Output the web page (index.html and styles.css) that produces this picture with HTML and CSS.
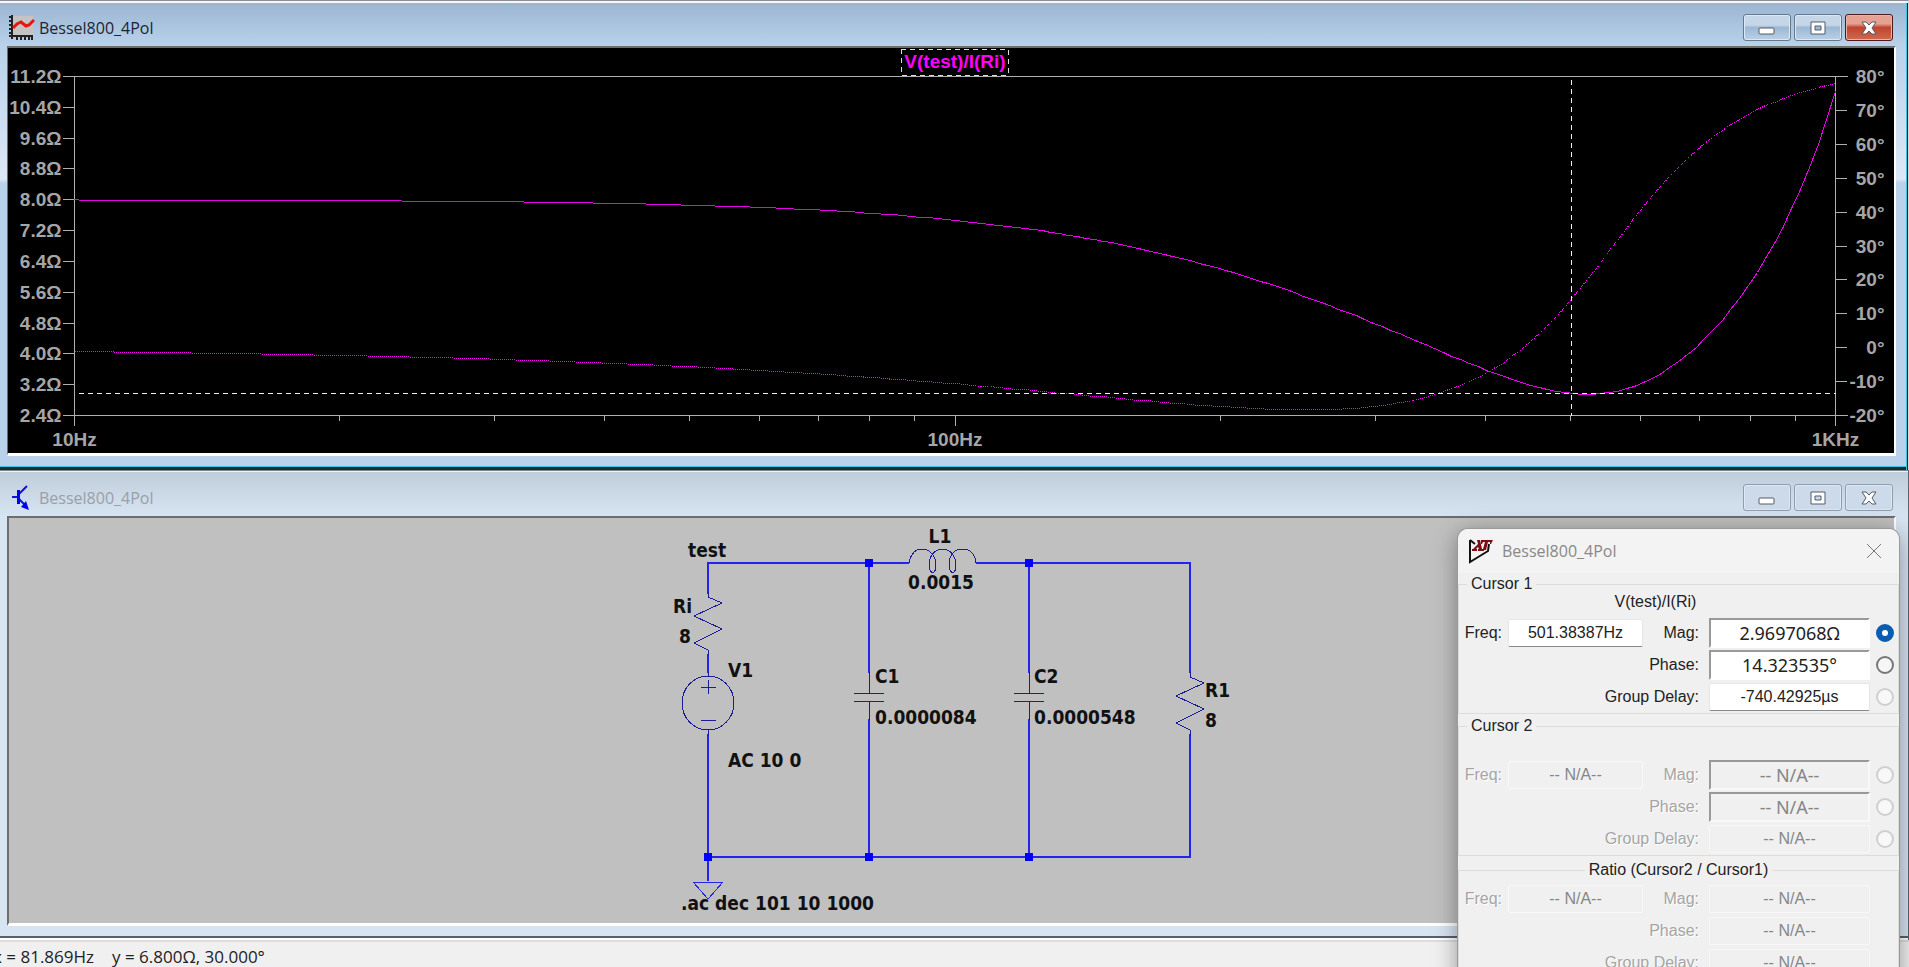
FILE: index.html
```html
<!DOCTYPE html>
<html lang="en">
<head>
<meta charset="utf-8">
<title>Bessel800_4Pol</title>
<link rel="stylesheet" href="styles.css">
</head>
<body>
<main class="desktop">
  <section class="window window-active" aria-label="Plot window">
    <header class="titlebar">
      <svg class="title-icon" width="26" height="26" viewBox="0 0 26 26" aria-hidden="true">
        <rect x="4" y="1" width="20" height="19" fill="#c4c4c4"/>
        <path d="M3 0V24M0 2H3M0 6H3M0 10H3M0 14H3M0 18H3" stroke="#222" stroke-width="2" fill="none"/>
        <path d="M0 21H24M8 21V25M12 21V25M16 21V25M20 21V25M23 21V25" stroke="#222" stroke-width="2" fill="none"/>
        <path d="M4 13L8 9L12 7L17 11L20 10L25 5" stroke="#e8150f" stroke-width="3" fill="none"/>
      </svg>
      <h1 class="title">Bessel800_4Pol</h1>
      <div class="caption-buttons">
        <button class="caption" type="button" aria-label="Minimize"><svg width="18" height="16" viewBox="0 0 18 16"><rect x="1" y="8" width="15" height="6" rx="1" class="glyph"/></svg></button>
        <button class="caption" type="button" aria-label="Maximize"><svg width="18" height="16" viewBox="0 0 18 16"><path fill-rule="evenodd" d="M2 2H16V14H2ZM6 6H12V10H6Z" class="glyph"/></svg></button>
        <button class="caption caption-close" type="button" aria-label="Close"><svg width="18" height="16" viewBox="0 0 18 16"><path d="M2 2H6L9 5L12 2H16L12 8L16 14H12L9 11L6 14H2L6 8Z" class="glyph"/></svg></button>
      </div>
    </header>
    <div class="pane plot-pane">
      <svg id="plot" class="plot" role="img" aria-label="V(test)/I(Ri) magnitude and phase"></svg>
    </div>
  </section>

  <section class="window window-idle" aria-label="Schematic window">
    <header class="titlebar">
      <svg class="title-icon" width="26" height="26" viewBox="0 0 26 26" aria-hidden="true">
        <path d="M3 12H9M10 9L18 1M10 14L17 21" stroke="#11d" stroke-width="2" fill="none"/>
        <path d="M8 5H11V19H8ZM20 25L12 22L17 16Z" fill="#00e"/>
      </svg>
      <h1 class="title">Bessel800_4Pol</h1>
      <div class="caption-buttons">
        <button class="caption" type="button" aria-label="Minimize"><svg width="18" height="16" viewBox="0 0 18 16"><rect x="1" y="8" width="15" height="6" rx="1" class="glyph"/></svg></button>
        <button class="caption" type="button" aria-label="Maximize"><svg width="18" height="16" viewBox="0 0 18 16"><path fill-rule="evenodd" d="M2 2H16V14H2ZM6 6H12V10H6Z" class="glyph"/></svg></button>
        <button class="caption" type="button" aria-label="Close"><svg width="18" height="16" viewBox="0 0 18 16"><path d="M2 2H6L9 5L12 2H16L12 8L16 14H12L9 11L6 14H2L6 8Z" class="glyph"/></svg></button>
      </div>
    </header>
    <div class="pane schematic-pane">
      <svg class="schematic" width="601" height="400" viewBox="651 518 601 400" role="img" aria-label="Filter schematic">
        <g class="wire">
          <path d="M708 594V563H909M976 563H1190V673M708 654V673M708 734V881M708 857H1190V734M869 563V673M869 719V857M1029 563V673M1029 719V857"/>
          <path class="ground" d="M693 882H723L708 899Z"/>
        </g>
        <g class="part">
          <path d="M708 592V597L722 603L694 616L722 629L694 643L708 650V656"/>
          <path d="M1190 672V677L1204 683L1176 696L1204 709L1176 723L1190 730V736"/>
          <ellipse cx="708" cy="703" rx="26" ry="27"/>
          <path d="M708 672V676M708 680V694M701 687H716M701 720H716M708 730V736"/>
          <path d="M869 672V693M854 693H884M854 701H884M869 701V720M1029 672V693M1014 693H1044M1014 701H1044M1029 701V720"/>
          <path d="M909 563C911 553 915 549 922 549C931 549 936 558 936 565C936 570 934 573 933 573C931 573 929 569 929 565C929 556 935 549 943 549C951 549 956 558 956 565C956 570 954 573 953 573C951 573 949 569 949 565C949 556 954 549 962 549C971 549 975 554 976 563"/>
        </g>
        <g class="node">
          <rect x="865" y="559" width="8" height="8"/><rect x="1025" y="559" width="8" height="8"/>
          <rect x="704" y="853" width="8" height="8"/><rect x="865" y="853" width="8" height="8"/><rect x="1025" y="853" width="8" height="8"/>
        </g>
        <g class="net">
          <text x="688" y="557">test</text>
          <text x="692" y="613" text-anchor="end">Ri</text>
          <text x="691" y="643" text-anchor="end">8</text>
          <text x="728" y="677">V1</text>
          <text x="728" y="767">AC 10 0</text>
          <text x="875" y="683">C1</text>
          <text x="875" y="724">0.0000084</text>
          <text x="1034" y="683">C2</text>
          <text x="1034" y="724">0.0000548</text>
          <text x="940" y="543" text-anchor="middle">L1</text>
          <text x="941" y="589" text-anchor="middle">0.0015</text>
          <text x="1205" y="697">R1</text>
          <text x="1205" y="727">8</text>
          <text x="681" y="910">.ac dec 101 10 1000</text>
        </g>
      </svg>
    </div>
  </section>

  <footer class="statusbar"><span>x = 81.869Hz</span><span>y = 6.800Ω, 30.000°</span></footer>

  <form class="dialog" aria-label="Cursor readout">
    <header class="dialog-title">
      <svg width="25" height="25" viewBox="0 0 25 25" aria-hidden="true">
        <path d="M2 1V23L20 12L21 5M2 1L7 5" fill="none" stroke="#111" stroke-width="2"/>
        <path d="M9 1H12L14 10H16V12H10V10H11L10 8L8 10H9V12H4V10H5L10 5ZM13 1H25L23 5H22V3H20L18 11H14V10H15L17 3H15L14 5H13Z" fill="#7c0d12"/>
      </svg>
      <h2 class="dialog-name">Bessel800_4Pol</h2>
      <button class="dialog-close" type="button" aria-label="Close"><svg width="16" height="16" viewBox="0 0 16 16"><path d="M1 1L15 15M15 1L1 15" stroke="#777" stroke-width="1" fill="none"/></svg></button>
    </header>
    <fieldset class="group">
      <legend>Cursor 1</legend>
      <p class="trace-name">V(test)/I(Ri)</p>
      <div class="readout">
        <label for="f1">Freq:</label><input id="f1" class="flat" value="501.38387Hz">
        <label class="inner" for="m1">Mag:</label><input id="m1" class="sunken" value="2.9697068Ω">
        <input type="radio" name="trace1" aria-label="Track magnitude, cursor 1" checked>
        <label class="inner wide" for="p1">Phase:</label><input id="p1" class="sunken" value="14.323535°">
        <input type="radio" name="trace1" aria-label="Track phase, cursor 1">
        <label class="inner wide" for="g1">Group Delay:</label><input id="g1" class="flat" value="-740.42925µs">
        <input type="radio" name="trace1" aria-label="Track group delay, cursor 1" disabled>
      </div>
    </fieldset>
    <fieldset class="group group-off">
      <legend>Cursor 2</legend>
      <div class="readout readout-low">
        <label for="f2">Freq:</label><input id="f2" class="flat" value="-- N/A--" disabled>
        <label class="inner" for="m2">Mag:</label><input id="m2" class="sunken" value="-- N/A--" disabled>
        <input type="radio" name="trace2" aria-label="Track magnitude, cursor 2" disabled>
        <label class="inner wide" for="p2">Phase:</label><input id="p2" class="sunken" value="-- N/A--" disabled>
        <input type="radio" name="trace2" aria-label="Track phase, cursor 2" disabled>
        <label class="inner wide" for="g2">Group Delay:</label><input id="g2" class="flat" value="-- N/A--" disabled>
        <input type="radio" name="trace2" aria-label="Track group delay, cursor 2" disabled>
      </div>
    </fieldset>
    <fieldset class="group group-off group-ratio">
      <legend>Ratio (Cursor2 / Cursor1)</legend>
      <div class="readout">
        <label for="f3">Freq:</label><input id="f3" class="flat" value="-- N/A--" disabled>
        <label class="inner" for="m3">Mag:</label><input id="m3" class="flat" value="-- N/A--" disabled>
        <label class="inner wide" for="p3">Phase:</label><input id="p3" class="flat" value="-- N/A--" disabled>
        <label class="inner wide" for="g3">Group Delay:</label><input id="g3" class="flat" value="-- N/A--" disabled>
      </div>
    </fieldset>
  </form>
</main>
<script src="plot.js"></script>
</body>
</html>
```
FILE: plot.js
```js
const svg = document.getElementById("plot");
const NS = "http://www.w3.org/2000/svg";

function add(name, attrs, text) {
  const el = document.createElementNS(NS, name);
  for (const key in attrs) el.setAttribute(key, attrs[key]);
  if (text) el.textContent = text;
  svg.appendChild(el);
}

// Input impedance of C1 || (L1 + (C2 || R1)): magnitude in ohms, phase in degrees.
function impedance(f) {
  const w = 2 * Math.PI * f, g = 1 / 8, b = w * 54.8e-6;
  const d = g * g + b * b;
  const re = g / d, im = -b / d + w * 0.0015;
  const m = re * re + im * im;
  const yr = re / m, yi = -im / m + w * 8.4e-6;
  return { mag: 1 / Math.hypot(yr, yi), phase: -Math.atan2(yi, yr) * 180 / Math.PI };
}

// Pixel centre nearest to a coordinate, so one-pixel strokes stay solid.
const snap = v => Math.floor(v) + 0.5;

function draw() {
  svg.replaceChildren();
  const left = snap(66), right = snap(svg.clientWidth - 59);
  const top = snap(28), bottom = snap(svg.clientHeight - 38);
  const width = right - left, height = bottom - top;
  const xOf = f => left + Math.log10(f / 10) / 2 * width;
  const yMag = z => bottom - (z - 2.4) / 8.8 * height;
  const yPhase = p => bottom - (p + 20) / 100 * height;

  let frame = `M${left - 12} ${top}H${right + 12}M${left - 12} ${bottom}H${right + 12}M${left} ${top}V${bottom + 10}M${right} ${top}V${bottom + 10}`;
  for (let i = 0; i <= 11; i++) {
    const y = snap(bottom - i / 11 * height);
    frame += `M${left - 12} ${y}H${left}`;
    add("text", { x: left - 13, y: y + 6, "text-anchor": "end", class: "tick" }, (2.4 + 0.8 * i).toFixed(1) + "Ω");
  }
  for (let i = 0; i <= 10; i++) {
    const y = snap(bottom - i / 10 * height);
    frame += `M${right} ${y}H${right + 11}`;
    add("text", { x: right + 49, y: y + 6, "text-anchor": "end", class: "tick" }, (i * 10 - 20) + "°");
  }
  for (let n = 2; n < 10; n++) {
    for (const base of [10, 100]) frame += `M${snap(xOf(n * base))} ${bottom}v5`;
  }
  frame += `M${snap(xOf(100))} ${bottom}v10`;
  add("path", { d: frame, class: "axis" });
  [[10, "10Hz"], [100, "100Hz"], [1000, "1KHz"]].forEach(([f, t]) =>
    add("text", { x: xOf(f), y: bottom + 30, "text-anchor": "middle", class: "tick" }, t));

  const mag = [], phase = [];
  for (let i = 0; i <= 202; i++) {
    const f = 10 * Math.pow(10, i / 101), z = impedance(f);
    mag.push(snap(xOf(f)) + " " + snap(yMag(z.mag)));
    phase.push(snap(xOf(f)) + " " + snap(yPhase(z.phase)));
  }
  add("path", { d: "M" + phase.join("L"), class: "trace trace-phase" });
  add("path", { d: "M" + mag.join("L"), class: "trace" });

  const cx = snap(xOf(501.38387)), cy = snap(yMag(2.9697068));
  add("path", { d: `M${cx} ${top + 3}V${bottom}M${left + 4} ${cy}H${right}`, class: "cursor" });

  const mid = Math.round(left + width / 2);
  add("rect", { x: mid - 54, y: 1, width: 107, height: 26, class: "trace-box" });
  add("text", { x: mid, y: 20, "text-anchor": "middle", class: "trace-label" }, "V(test)/I(Ri)");
}

draw();
window.addEventListener("resize", draw);
```
FILE: styles.css
```css
* { box-sizing: border-box; }
body { margin: 0; background: #f0f0f0; font-family: "Open Sans", "Noto Sans", sans-serif; }
.desktop { position: relative; display: flex; flex-direction: column; height: 100vh; overflow: hidden; }

.window { flex: 1; min-height: 0; display: flex; flex-direction: column; padding: 0 12px 14px 7px; }
.window-active {
  border-top: 1px solid #8a8f96;
  border-right: 1px solid #d8d8d8;
  background: linear-gradient(#99b4d1 0, #b9d1ea 44px, #dce8f6 178px, #b9d1ea 182px);
  box-shadow: inset 0 2px #f4f8fc, inset -1px 0 #123, inset -2px 0 #3fc6df, inset 0 -3px #1b2b30, inset 0 -4px #3fc6df;
}
.window-idle {
  border-top: 1px solid #7c858c;
  border-right: 1px solid #58646e;
  background: linear-gradient(#bfcddb 0, #d7e4f2 46px);
  box-shadow: inset 0 1px #eef3f8, inset 0 -2px #fff, inset 0 -4px #5b6066;
}
.titlebar { flex: none; display: flex; align-items: center; height: 45px; padding-top: 8px; }
.title-icon { margin-left: 2px; }
.title { flex: 1; margin: 0 0 0 4px; font-size: 16px; line-height: 24px; font-weight: 400; color: #1c2433; }
.window-idle .title { color: #98a0a8; }
.caption-buttons { display: flex; gap: 3px; margin-right: 3px; }
.caption {
  width: 48px; height: 27px; padding: 0; display: grid; place-items: center;
  border: 1px solid #66788c; border-radius: 3px;
  background: linear-gradient(#c5d6e8 0 40%, #9db8d3 50%, #b9d1e8);
  box-shadow: inset 0 0 0 1px #dce9f5;
}
.caption-close { border-color: #4c1a1c; background: linear-gradient(#e5a292 0 35%, #bf4530 50%, #d06a4f); box-shadow: inset 0 0 0 1px #e9b3a5; }
.window-idle .caption { border-color: #8f9dae; background: #cddaea; }
.glyph { fill: #fff; stroke: #555a66; stroke-width: 1; }

.pane { flex: 1; min-height: 0; border: 2px solid; border-color: #6d6d6d #fff #fff #6d6d6d; border-bottom-width: 3px; overflow: hidden; }
.plot-pane { background: #000; border-left-width: 1px; }
.plot { display: block; width: 100%; height: 100%; }
.tick { font: bold 19px "Liberation Sans", Arial, sans-serif; fill: #a6a6a6; }
.axis { fill: none; stroke: #b0b0b0; stroke-width: 1; shape-rendering: crispEdges; }
.trace { fill: none; stroke: #e800e8; stroke-width: 1; shape-rendering: crispEdges; }
.trace-phase { stroke: #f0f; stroke-dasharray: 1 1; }
.cursor { fill: none; stroke: #f0f0f0; stroke-width: 1; stroke-dasharray: 5 4; shape-rendering: crispEdges; }
.trace-box { fill: #000; stroke: #ddd; stroke-width: 1; stroke-dasharray: 5 4; shape-rendering: crispEdges; }
.trace-label { font: bold 19px "Liberation Sans", Arial, sans-serif; fill: #f0f; }

.schematic-pane { display: flex; justify-content: center; background: #c0c0c0; }
.schematic { flex: none; }
.wire, .part { fill: none; shape-rendering: crispEdges; }
.wire { stroke: #2424ee; stroke-width: 2; }
.part { stroke: #1c1c96; stroke-width: 1; }
.ground { stroke-width: 1; }
.node { fill: #00f; }
.net { font: bold 19px "DejaVu Sans Condensed", "DejaVu Sans", sans-serif; fill: #111; }

.statusbar { flex: none; display: flex; gap: 18px; height: 27px; margin-left: -7px; border-top: 2px solid #ddd; font-size: 17px; line-height: 30px; color: #222; white-space: pre; }

.dialog {
  position: absolute; top: 529px; right: 10px; width: 441px; height: 500px;
  border-radius: 10px 10px 0 0; background: #f0f0f0;
  box-shadow: 0 0 0 1px #9a9a9a, 0 4px 24px rgba(0, 0, 0, .4);
  font: 16px "Liberation Sans", Arial, sans-serif; color: #222; overflow: hidden;
}
.dialog-title { display: flex; align-items: center; height: 44px; padding: 0 16px 0 10px; background: #f3f3f3; }
.dialog-name { flex: 1; margin: 0 0 0 9px; font: 16px "Open Sans", "Noto Sans", sans-serif; color: #888; }
.dialog-close { width: 18px; height: 18px; padding: 0; border: 0; background: none; display: grid; place-items: center; }
.group { margin: 0 0 1px; padding: 0; min-width: 0; border: 1px solid #dcdcdc; }
.group legend { height: 22px; line-height: 22px; margin-left: 8px; padding: 0 4px; }
.group-ratio { margin-top: 3px; }
.group-ratio legend { margin: 0 auto; }
.group-ratio .readout { padding-top: 2px; }
.trace-name { margin: 0; height: 22px; line-height: 14px; text-align: center; text-indent: -46px; }
.readout { display: grid; grid-template-columns: 43px 135px 54px 161px 18px; grid-auto-rows: 32px; column-gap: 6px; align-items: center; }
.readout-low { padding-top: 22px; }
.readout label { text-align: right; white-space: nowrap; }
.readout .inner { padding-right: 4px; }
.readout .wide { grid-column: 1 / 4; }
.readout input { min-width: 0; width: 100%; padding: 0; text-align: center; color: #222; background: #fff; border: 1px solid #e6e6e6; font: 16px "Liberation Sans", Arial, sans-serif; }
.readout .flat { height: 28px; border-bottom-color: #888; border-radius: 2px; }
.readout .sunken { height: 30px; border: 2px solid; border-color: #999 #fff #fff #999; font: 18px "Noto Sans", "DejaVu Sans", sans-serif; }
.group-off label { color: #a5a5a5; text-shadow: 1px 1px #fff; }
.readout input:disabled { background: #f0f0f0; color: #868686; }
.readout .flat:disabled { border-color: #f8f8f8; }
.readout .sunken:disabled { border-color: #999 #f8f8f8 #f8f8f8 #999; }
.readout input[type="radio"] { appearance: none; width: 18px; height: 18px; margin: 0; border: 2px solid #777; border-radius: 50%; background: #f6f6f6; }
.readout input[type="radio"]:checked { border: 6px solid #0a5cb0; background: #fff; }
.readout input[type="radio"]:disabled { border: 2px solid #cfcfcf; background: #f8f8f8; }
```
